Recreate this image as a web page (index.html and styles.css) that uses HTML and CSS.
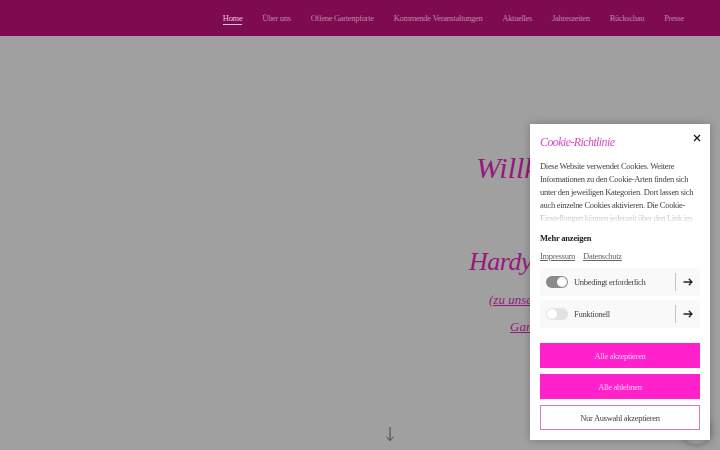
FILE: index.html
```html
<!DOCTYPE html>
<html lang="de">
<head>
    <meta charset="UTF-8">
    <meta name="viewport" content="width=device-width, initial-scale=1.0">
    <title>Home</title>
    <link rel="stylesheet" href="styles.css">
</head>
<body>
    <header class="topbar">
        <nav class="menu">
            <a class="active" href="#">Home</a>
            <a href="#">Über uns</a>
            <a href="#">Offene Gartenpforte</a>
            <a href="#">Kommende Veranstaltungen</a>
            <a href="#">Aktuelles</a>
            <a href="#">Jahreszeiten</a>
            <a href="#">Rückschau</a>
            <a href="#">Presse</a>
        </nav>
    </header>

    <main class="hero">
        <div class="hero-text">
            <h1 class="hero-welcome">Willkommen</h1>
            <h2 class="hero-name">Hardy</h2>
            <a class="hero-link" href="#">(zu unserem</a>
            <a class="hero-link second" href="#">Garten)</a>
        </div>
        <svg class="hero-arrow" width="10" height="16" viewBox="0 0 10 16">
            <path d="M5 1V14.5M1.6 10.8L5 14.5L8.4 10.8" fill="none" stroke="#444" stroke-width="1"/>
        </svg>
        <div class="float-button"></div>
    </main>

    <aside class="cookie">
        <button class="cookie-close" aria-label="Schließen">
            <svg width="8" height="8" viewBox="0 0 8 8">
                <path d="M1 1L7 7M7 1L1 7" stroke="#111" stroke-width="1.2"/>
            </svg>
        </button>
        <h3 class="cookie-title">Cookie-Richtlinie</h3>
        <div class="cookie-text">
            <p>Diese Website verwendet Cookies. Weitere Informationen zu den Cookie-Arten finden sich unter den jeweiligen Kategorien. Dort lassen sich auch einzelne Cookies aktivieren. Die Cookie-Einstellungen können jederzeit über den Link im</p>
        </div>
        <div class="cookie-more">Mehr anzeigen</div>
        <div class="cookie-links">
            <a href="#">Impressum</a>
            <a href="#">Datenschutz</a>
        </div>
        <div class="cookie-row">
            <span class="toggle on"></span>
            <span class="row-label">Unbedingt erforderlich</span>
            <span class="row-more">
                <svg width="10" height="8" viewBox="0 0 10 8">
                    <path d="M0.5 4H9M5.8 0.8L9 4L5.8 7.2" fill="none" stroke="#222" stroke-width="1.3"/>
                </svg>
            </span>
        </div>
        <div class="cookie-row">
            <span class="toggle"></span>
            <span class="row-label">Funktionell</span>
            <span class="row-more">
                <svg width="10" height="8" viewBox="0 0 10 8">
                    <path d="M0.5 4H9M5.8 0.8L9 4L5.8 7.2" fill="none" stroke="#222" stroke-width="1.3"/>
                </svg>
            </span>
        </div>
        <button class="cookie-btn first">Alle akzeptieren</button>
        <button class="cookie-btn">Alle ablehnen</button>
        <button class="cookie-btn outline">Nur Auswahl akzeptieren</button>
    </aside>
</body>
</html>
```

FILE: styles.css
```css
* {
    box-sizing: border-box;
}

html, body {
    height: 100%;
}

body {
    margin: 0;
    font-family: 'Liberation Serif', serif;
    background-color: #a0a0a0;
    display: flex;
    flex-direction: column;
    overflow: hidden;
}

a {
    color: inherit;
}

.topbar {
    height: 36px;
    flex: none;
    background-color: #7e0a50;
    display: flex;
    justify-content: flex-end;
    padding-right: 36px;
}

.menu {
    display: flex;
    gap: 20px;
    font-size: 8.5px;
    letter-spacing: -0.32px;
    padding-top: 13px;
}

.menu a {
    color: #bd86a8;
    text-decoration: none;
    height: 12px;
}

.menu a.active {
    color: #e6c4d9;
    border-bottom: 1px solid #e6c4d9;
}

.hero {
    flex: 1;
    position: relative;
    padding: 112px 0 0 469px;
}

.hero-text {
    display: flex;
    flex-direction: column;
    align-items: flex-start;
    font-style: italic;
    color: #97177c;
    white-space: nowrap;
}

.hero-welcome {
    margin: 0 0 0 7px;
    font-size: 30px;
    font-weight: normal;
    line-height: 40px;
}

.hero-name {
    margin: 54px 0 0;
    font-size: 26px;
    font-weight: normal;
    letter-spacing: -0.5px;
    line-height: 40px;
}

.hero-link {
    font-size: 13px;
    line-height: 27px;
    margin: 4px 0 0 20px;
}

.hero-link.second {
    margin: 0 0 0 41px;
}

.hero-arrow {
    position: absolute;
    left: 385px;
    bottom: 8px;
}

.float-button {
    position: absolute;
    right: 10px;
    bottom: 6px;
    width: 28px;
    height: 28px;
    border-radius: 50%;
    box-shadow: 0 0 8px rgba(0, 0, 0, 0.35);
}

.cookie {
    position: fixed;
    right: 10px;
    bottom: 10px;
    width: 180px;
    height: 316px;
    background-color: #fff;
    padding: 10px;
    box-shadow: 0 0 8px rgba(0, 0, 0, 0.25);
}

.cookie-close {
    position: absolute;
    top: 10px;
    right: 9px;
    border: none;
    background: none;
    padding: 0;
    width: 8px;
    height: 8px;
    display: flex;
}

.cookie-title {
    margin: 0;
    font-size: 12px;
    letter-spacing: -0.6px;
    line-height: 16px;
    font-weight: normal;
    font-style: italic;
    color: #dc46c8;
}

.cookie-text {
    margin-top: 10px;
    height: 65px;
    overflow: hidden;
    position: relative;
    font-size: 8.5px;
    letter-spacing: -0.3px;
    line-height: 13px;
    color: #444;
}

.cookie-text p {
    margin: 0;
}

.cookie-text::after {
    content: "";
    position: absolute;
    left: 0;
    right: 0;
    bottom: 0;
    height: 15px;
    background: linear-gradient(rgba(255, 255, 255, 0.4), #fff);
}

.cookie-more {
    margin-top: 7px;
    font-size: 8.5px;
    letter-spacing: -0.2px;
    font-weight: bold;
    line-height: 13px;
    color: #222;
}

.cookie-links {
    margin-top: 5px;
    display: flex;
    gap: 8px;
    font-size: 8.5px;
    letter-spacing: -0.3px;
    line-height: 13px;
    color: #666;
}

.cookie-row {
    margin-top: 4px;
    height: 28px;
    background-color: #f9f9f9;
    display: flex;
    align-items: center;
    padding-left: 6px;
    font-size: 8.5px;
    letter-spacing: -0.3px;
    color: #444;
}

.cookie-links + .cookie-row {
    margin-top: 5px;
}

.toggle {
    width: 22px;
    height: 12px;
    border-radius: 6px;
    background-color: #e2e2e2;
    padding: 1px;
    display: flex;
}

.toggle::before {
    content: "";
    width: 10px;
    height: 10px;
    border-radius: 50%;
    background-color: #fff;
}

.toggle.on {
    background-color: #8a8a8a;
    justify-content: flex-end;
}

.row-label {
    margin-left: 6px;
    flex: 1;
}

.row-more {
    width: 25px;
    height: 18px;
    border-left: 1px solid #c4c4c4;
    display: flex;
    align-items: center;
    justify-content: center;
}

.cookie-btn {
    display: block;
    width: 100%;
    height: 25px;
    margin-top: 6px;
    border: none;
    background-color: #ff22cc;
    color: #fbc4ee;
    font-family: inherit;
    font-size: 8.5px;
    letter-spacing: -0.3px;
}

.cookie-btn.first {
    margin-top: 15px;
}

.cookie-btn.outline {
    background-color: #fff;
    border: 1px solid #cc7fc0;
    color: #444;
}
```
